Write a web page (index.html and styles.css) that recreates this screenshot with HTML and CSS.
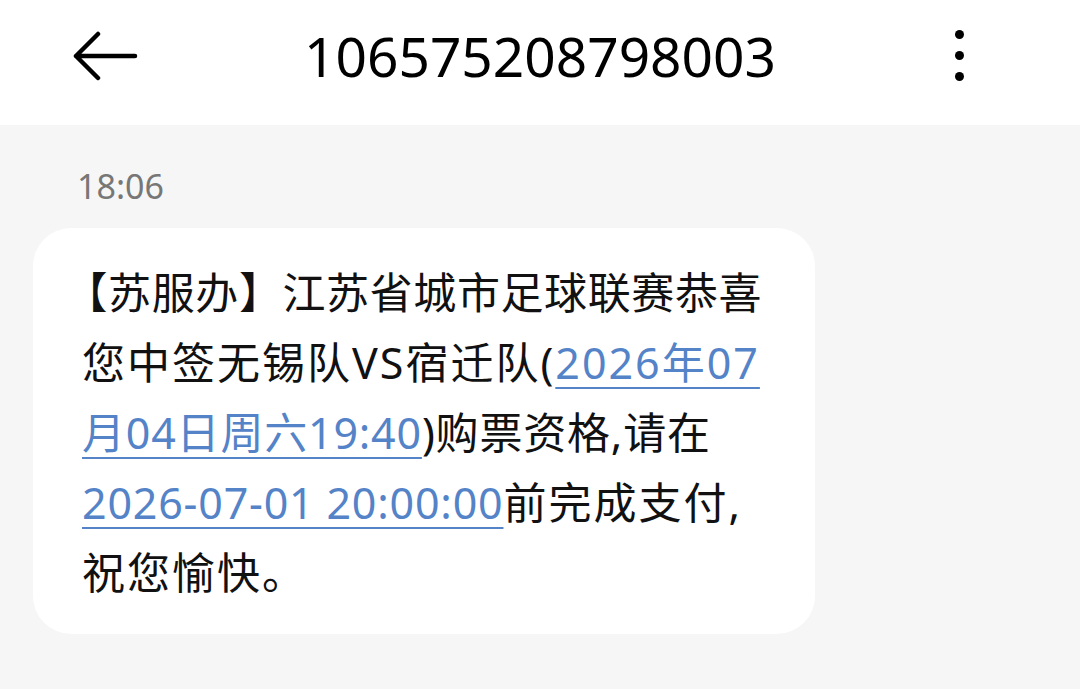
FILE: index.html
```html
<!DOCTYPE html>
<html lang="zh-CN">
  <head>
    <meta charset="UTF-8" />
    <meta name="viewport" content="width=device-width, initial-scale=1.0" />
    <title>106575208798003</title>
    <link rel="stylesheet" href="styles.css">
  </head>
  <body>
    <header class="topbar">
      <button type="button" class="icon_btn back_btn" aria-label="返回">
        <svg width="66" height="50" viewBox="0 0 66 50">
          <path d="M3 25 H62 M3 25 L25 3 M3 25 L25 47" fill="none" stroke="#000" stroke-width="4.5" stroke-linecap="round" stroke-linejoin="round" />
        </svg>
      </button>
      <h1 class="title">106575208798003</h1>
      <button type="button" class="icon_btn more_btn" aria-label="更多">
        <span class="dot"></span>
        <span class="dot"></span>
        <span class="dot"></span>
      </button>
    </header>

    <main class="thread">
      <div class="msg_time">18:06</div>
      <div class="bubble">
        <p class="msg_text"><span class="first_line"><span class="brk_open">【</span>苏服办】江苏省城市足球联赛恭喜</span><br>您中签无锡队VS宿迁队(<a href="#" class="msg_link">2026年07<br><span class="tight">月04日周六19:40</span></a><span class="tight">)购票资格,请在</span><br><a href="#" class="msg_link tight">2026-07-01 20:00:00</a>前完成支付,<br>祝您愉快。</p>
      </div>
    </main>
  </body>
</html>
```

FILE: styles.css
```css
* {
  box-sizing: border-box;
  padding: 0;
  margin: 0;
}
body {
  width: 1080px;
  height: 689px;
  overflow: hidden;
  background-color: #f6f6f6;
  font-family: "Noto Sans", "Noto Sans CJK SC", sans-serif;
  color: #000;
}
.topbar {
  height: 125px;
  background-color: #fff;
  display: grid;
  grid-template-columns: 1fr auto 1fr;
  align-items: center;
  padding-bottom: 14px;
}
.icon_btn {
  border: none;
  background: none;
  cursor: pointer;
}
.back_btn {
  justify-self: start;
  margin-left: 73px;
  display: flex;
}
.title {
  font-size: 55px;
  font-weight: 400;
  line-height: 1;
}
.more_btn {
  justify-self: end;
  margin-right: 114px;
  display: flex;
  flex-direction: column;
  gap: 12px;
  padding: 0 2px;
}
.dot {
  width: 9px;
  height: 9px;
  border-radius: 50%;
  background-color: #000;
}
.thread {
  padding: 41px 0 0 33px;
}
.msg_time {
  font-size: 34px;
  line-height: 40px;
  color: #777;
  margin-left: 44px;
}
.bubble {
  margin-top: 22px;
  width: 782px;
  background-color: #fff;
  border-radius: 38px;
  padding: 30px 20px 26px 49px;
}
.msg_text {
  font-size: 43px;
  line-height: 70px;
  letter-spacing: 2px;
  white-space: nowrap;
  color: #111;
}
.first_line {
  letter-spacing: 0.6px;
}
.brk_open {
  font-feature-settings: "halt";
  margin-left: 4px;
}
.tight {
  letter-spacing: 0.8px;
}
.msg_link {
  color: #5483c8;
  text-decoration: underline;
  text-decoration-thickness: 2px;
  text-underline-offset: 8px;
}
```
